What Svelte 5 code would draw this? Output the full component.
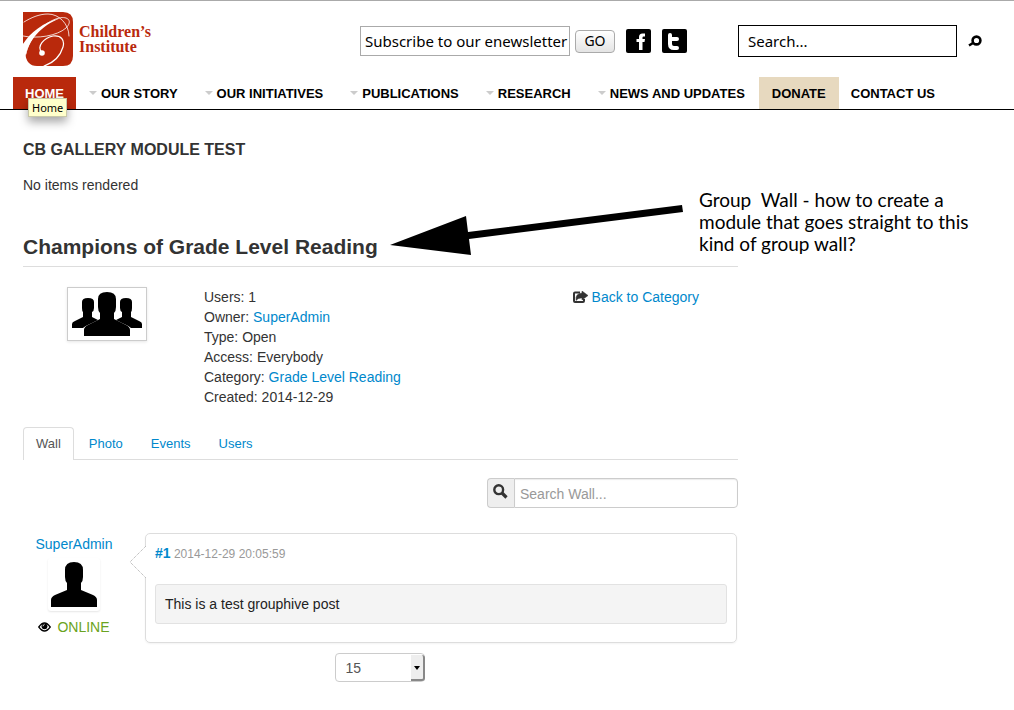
<script lang="ts">
    type NavItem = {
        label: string;
        dropdown?: boolean;
        kind?: 'active' | 'donate';
    };

    const navItems: NavItem[] = [
        { label: 'HOME', kind: 'active' },
        { label: 'OUR STORY', dropdown: true },
        { label: 'OUR INITIATIVES', dropdown: true },
        { label: 'PUBLICATIONS', dropdown: true },
        { label: 'RESEARCH', dropdown: true },
        { label: 'NEWS AND UPDATES', dropdown: true },
        { label: 'DONATE', kind: 'donate' },
        { label: 'CONTACT US' },
    ];

    const details = [
        { name: 'Users', value: '1' },
        { name: 'Owner', value: 'SuperAdmin', link: true },
        { name: 'Type', value: 'Open' },
        { name: 'Access', value: 'Everybody' },
        { name: 'Category', value: 'Grade Level Reading', link: true },
        { name: 'Created', value: '2014-12-29' },
    ];

    const tabs = ['Wall', 'Photo', 'Events', 'Users'];

    let activeTab = $state('Wall');
    let pageSize = $state('15');
</script>

<header class="site-header">
    <a class="brand" href="#home">
        <svg width="50" height="54" viewBox="0 0 50 54" aria-hidden="true">
            <path d="M0 0H40Q50 0 50 10V44Q50 54 40 54H14Q3 54 2 40Q2 34 0 31Z" fill="#b9290c" />
            <g fill="none" stroke="#fff" stroke-linecap="round">
                <path d="M0 24C14 27 34 24 43 16C50 9 45 4 36 6C20 10 5 27 3 42" stroke-width="0.800" />
                <path d="M46 24C46 12 36 2 25 2C17 2 9 5 1 10" stroke-width="0.800" />
                <path d="M19 41C13 34 21 26 30 24C38 23 42 28 40 35C37 45 30 51 21 54" stroke-width="1.200" />
            </g>
            <path d="M38 6C20 10 7 21 0 32V35L2 46C6 28 17 14 38 6Z" fill="#fff" />
            <circle cx="19" cy="41" r="2.800" fill="#fff" />
        </svg>
        <span class="brand-name">Children’s<br />Institute</span>
    </a>

    <form class="newsletter">
        <input type="text" aria-label="Email" value="Subscribe to our enewsletter" />
        <button type="button">GO</button>
    </form>

    <div class="social">
        <a href="#facebook" aria-label="Facebook">
            <svg width="25" height="24" viewBox="0 0 25 24">
                <rect width="25" height="24" rx="2" fill="#000" />
                <path d="M13 21V13H10.500V10H13V8Q13 4.500 16.500 4.500H19V7.500H17.500Q16.500 7.500 16.500 8.500V10H19L18.500 13H16.500V21Z" fill="#fff" />
            </svg>
        </a>
        <a href="#twitter" aria-label="Twitter">
            <svg width="25" height="24" viewBox="0 0 25 24">
                <rect width="25" height="24" rx="2" fill="#000" />
                <path d="M8 6V15Q8 19 12 19H15M8 10H15" fill="none" stroke="#fff" stroke-width="4" stroke-linecap="round" />
            </svg>
        </a>
    </div>

    <form class="site-search">
        <input type="text" aria-label="Search" value="Search..." />
        <button type="button" aria-label="Search">
            <svg width="14" height="12" viewBox="0 0 14 12">
                <circle cx="8.500" cy="5.500" r="3.900" fill="none" stroke="#000" stroke-width="2.600" />
                <path d="M5 8L1 10.500" stroke="#000" stroke-width="2.500" />
            </svg>
        </button>
    </form>
</header>

<nav class="main-nav">
    {#each navItems as item}
        <a
            href="#nav"
            class:active={item.kind === 'active'}
            class:donate={item.kind === 'donate'}
            class:dropdown={item.dropdown}
        >
            {item.label}
            {#if item.kind === 'active'}
                <span class="tooltip" role="tooltip">Home</span>
            {/if}
        </a>
    {/each}
</nav>

<main>
    <section class="gallery">
        <h3>CB GALLERY MODULE TEST</h3>
        <p>No items rendered</p>
    </section>

    <h2>Champions of Grade Level Reading</h2>

    <section class="group">
        <div class="group-thumb">
            <svg width="70" height="44" viewBox="0 0 70 44" role="img" aria-label="Group">
                <path d="M10 10Q10 6 16 6Q22 6 22 10V16Q22 19 20 20V25L26 28L20 31Q13 34 11 36H0V32Q0 30 3 29L11 25V20Q10 19 10 16Z" />
                <path d="M60 10Q60 6 54 6Q48 6 48 10V16Q48 19 50 20V25L44 28L50 31Q57 34 59 36H70V32Q70 30 67 29L59 25V20Q60 19 60 16Z" />
                <path d="M26 7Q26 0 35 0Q44 0 44 7V15Q44 19 42 21V27L54 33Q58 35 58 38V44H12V38Q12 35 16 33L28 27V21Q26 19 26 15Z" />
            </svg>
        </div>
        <ul class="details">
            {#each details as row}
                <li>
                    {row.name}:
                    {#if row.link}<a href="#detail">{row.value}</a>{:else}{row.value}{/if}
                </li>
            {/each}
        </ul>
        <div class="back">
            <svg width="15" height="12" viewBox="0 0 15 12" aria-hidden="true">
                <path d="M7 1.500H2Q1 1.500 1 2.500V10Q1 11 2 11H10Q11 11 11 10V8" fill="none" stroke="#333" stroke-width="2" />
                <path d="M9 0L15 4.500L9 9V7Q5 6.500 3 9.500Q2 2.500 9 2Z" fill="#333" stroke="#333" stroke-width="0.500" />
            </svg>
            <a href="#category">Back to Category</a>
        </div>
    </section>

    <div class="tabs" role="tablist">
        {#each tabs as tab}
            <button
                type="button"
                role="tab"
                aria-selected={activeTab === tab}
                class:selected={activeTab === tab}
                onclick={() => (activeTab = tab)}
            >{tab}</button>
        {/each}
    </div>

    <form class="wall-search">
        <label for="wall-query" aria-label="Search Wall">
            <svg width="15" height="15" viewBox="0 0 15 15">
                <circle cx="5.700" cy="5.700" r="4.400" fill="none" stroke="#333" stroke-width="2.400" />
                <path d="M9 9L13.500 13.500" stroke="#333" stroke-width="3.200" />
            </svg>
        </label>
        <input id="wall-query" type="text" placeholder="Search Wall..." />
    </form>

    <article class="post">
        <div class="author">
            <a href="#author">SuperAdmin</a>
            <div class="avatar">
                <svg width="46" height="45" viewBox="0 0 46 45" role="img" aria-label="Avatar">
                    <path d="M14 8Q14 0 23 0Q32 0 32 8V15Q32 19 30 21V28L42 33Q46 35 46 38V45H0V38Q0 35 4 33L16 28V21Q14 19 14 15Z" />
                </svg>
            </div>
            <div class="status">
                <svg width="13" height="10" viewBox="0 0 13 10" aria-hidden="true">
                    <path d="M0.800 5Q6.500 -3 12.200 5Q6.500 13 0.800 5Z" fill="#fff" stroke="#000" stroke-width="1.300" />
                    <circle cx="6.500" cy="4.300" r="2.900" fill="#000" />
                    <path d="M5 4.300Q5 2.800 6.500 2.600" fill="none" stroke="#fff" stroke-width="0.900" />
                </svg>
                ONLINE
            </div>
        </div>
        <div class="bubble">
            <svg class="pointer" width="17" height="34" viewBox="0 0 17 34" aria-hidden="true">
                <path d="M17 1L1 17L17 33" fill="#fff" stroke="#aaa" stroke-dasharray="1 1" />
            </svg>
            <div class="meta"><a href="#post">#1</a> 2014-12-29 20:05:59</div>
            <div class="message">This is a test grouphive post</div>
        </div>
    </article>

    <div class="pager">
        <div class="select-box">
            <select aria-label="Posts per page" bind:value={pageSize}>
                <option>15</option>
                <option>30</option>
                <option>50</option>
            </select>
            <span class="select-arrow"></span>
        </div>
    </div>

    <aside class="annotation">
        <svg width="294" height="52" viewBox="0 0 294 52" aria-hidden="true">
            <path d="M0 41L76 12L78 28L292 1L293 8L79 35L81 51Z" />
        </svg>
        <p>Group&nbsp; Wall - how to create a<br />module that goes straight to this<br />kind of group wall?</p>
    </aside>
</main>

<style>
    :global(body) {
        background: #fff;
        color: #333;
        font: 14px/20px "Liberation Sans", Arial, sans-serif;
    }

    :global(*) {
        box-sizing: border-box;
    }

    a {
        color: #08c;
        text-decoration: none;
    }

    svg {
        display: block;
    }

    input, button, select {
        margin: 0;
        font: inherit;
        color: #000;
    }

    .site-header {
        display: flex;
        align-items: center;
        height: 77px;
        padding: 0 32px 0 23px;
        border-top: 1px solid #aaa;
    }

    .brand {
        display: flex;
        align-items: center;
        gap: 6px;
        margin-right: auto;
        color: #b9290c;
    }

    .brand-name {
        font: bold 16px/15px "Liberation Serif", "Times New Roman", serif;
    }

    .newsletter,
    .social,
    .site-search {
        display: flex;
        align-items: center;
        padding-top: 4px;
        /* Lucida-like metrics for the header controls */
        font: 15px/20px "Noto Sans", sans-serif;
    }

    .newsletter {
        gap: 5px;
    }

    .newsletter input {
        width: 210px;
        height: 30px;
        padding: 0 0 0 4px;
        border: 1px solid #aaa;
    }

    .newsletter button {
        width: 40px;
        height: 23px;
        padding: 0;
        border: 1px solid #aaa;
        border-radius: 4px;
        background: linear-gradient(#fff, #e4e4e4);
        font-size: 14px;
        line-height: 20px;
    }

    .social {
        gap: 11px;
        margin: 0 51px 0 11px;
    }

    .site-search {
        gap: 11px;
    }

    .site-search input {
        width: 219px;
        height: 32px;
        padding: 0 9px;
        border: 1px solid #000;
    }

    .site-search button {
        padding: 0;
        border: 0;
        background: none;
    }

    .main-nav {
        display: flex;
        height: 33px;
        padding-left: 13px;
        border-bottom: 1px solid #000;
        font-size: 13px;
        font-weight: bold;
        line-height: 33px;
    }

    .main-nav a {
        position: relative;
        height: 32px;
        padding: 0 12px;
        color: #000;
        white-space: nowrap;
    }

    .main-nav .active {
        background: #b9290c;
        color: #fff;
    }

    .main-nav .donate {
        padding: 0 13px;
        background: #e7d9bf;
    }

    .main-nav .dropdown {
        padding: 0 14px 0 25px;
    }

    .main-nav .dropdown::before {
        content: "";
        position: absolute;
        left: 13px;
        top: 14px;
        border: 4px solid transparent;
        border-top-color: #ccc;
        border-bottom: 0;
    }

    .tooltip {
        position: absolute;
        left: 15px;
        top: 21px;
        z-index: 1;
        padding: 0 3px;
        border: 1px solid #c8c8a8;
        background: #ffffcb;
        box-shadow: 0 5px 10px rgba(0, 0, 0, 0.35);
        color: #000;
        font: 11px/17px "Noto Sans", sans-serif;
    }

    main {
        position: relative;
        padding: 30px 276px 28px 23px;
    }

    h2, h3, p, ul {
        margin: 0;
        padding: 0;
    }

    h3 {
        margin-bottom: 15px;
        font-size: 16px;
        line-height: 20px;
    }

    h2 {
        margin: 37px 0 20px;
        padding-bottom: 4px;
        border-bottom: 1px solid #ddd;
        font-size: 21px;
        line-height: 30px;
    }

    .group {
        display: flex;
    }

    .group-thumb {
        align-self: flex-start;
        margin: 0 57px 0 44px;
        padding: 4px;
        border: 1px solid #ccc;
        box-shadow: 0 1px 3px rgba(0, 0, 0, 0.1);
    }

    .details {
        flex: 1;
        list-style: none;
    }

    .back {
        display: flex;
        align-items: center;
        align-self: flex-start;
        gap: 4px;
        margin-right: 39px;
    }

    .tabs {
        display: flex;
        gap: 2px;
        margin: 20px 0 18px;
        border-bottom: 1px solid #ddd;
    }

    .tabs button {
        height: 33px;
        margin-bottom: -1px;
        padding: 0 12px;
        border: 1px solid transparent;
        border-bottom: 0;
        border-radius: 4px 4px 0 0;
        background: none;
        color: #08c;
        font-size: 13px;
    }

    .tabs .selected {
        border-color: #ddd;
        background: #fff;
        color: #555;
    }

    .wall-search {
        display: flex;
        justify-content: flex-end;
        height: 30px;
        margin-bottom: 25px;
    }

    .wall-search label {
        width: 27px;
        padding: 5px;
        border: 1px solid #ccc;
        border-right: 0;
        border-radius: 4px 0 0 4px;
        background: #eee;
    }

    .wall-search input {
        width: 224px;
        padding: 2px 5px 0;
        border: 1px solid #ccc;
        border-radius: 0 4px 4px 0;
        box-shadow: inset 0 1px 1px rgba(0, 0, 0, 0.08);
    }

    .wall-search input::placeholder {
        color: #999;
        opacity: 1;
    }

    .post {
        display: flex;
        gap: 20px;
        padding-right: 1px;
    }

    .author {
        display: flex;
        flex-direction: column;
        align-items: center;
        width: 102px;
        padding-top: 1px;
    }

    .avatar {
        margin: 4px 0 6px;
        padding: 4px 3px;
        border-radius: 3px;
        box-shadow: 0 1px 2px rgba(0, 0, 0, 0.1);
    }

    .status {
        display: flex;
        align-items: center;
        gap: 6px;
        color: #6aa322;
    }

    .bubble {
        position: relative;
        flex: 1;
        min-height: 110px;
        padding: 9px;
        border: 1px solid #ddd;
        border-radius: 5px;
        box-shadow: 0 1px 2px rgba(0, 0, 0, 0.05);
    }

    .pointer {
        position: absolute;
        left: -17px;
        top: 11px;
    }

    .meta {
        margin-bottom: 20px;
        color: #999;
        font-size: 12px;
    }

    .meta a {
        font-size: 14px;
        font-weight: bold;
    }

    .message {
        padding: 9px;
        border: 1px solid #e2e2e2;
        border-radius: 3px;
        background: #f4f4f4;
        color: #222;
    }

    .pager {
        display: flex;
        justify-content: center;
        margin-top: 10px;
        padding-right: 2px;
    }

    .select-box {
        position: relative;
    }

    select {
        display: block;
        width: 90px;
        height: 29px;
        padding: 0 10px;
        border: 1px solid #ccc;
        border-radius: 4px;
        background: #fff;
        color: #555;
        appearance: none;
    }

    .select-arrow {
        position: absolute;
        top: 2px;
        right: 0;
        bottom: 1px;
        width: 14px;
        border-right: 2px solid #888;
        border-bottom: 2px solid #888;
        border-radius: 0 3px 3px 0;
        background: #eee;
        pointer-events: none;
    }

    .select-arrow::before {
        content: "";
        position: absolute;
        left: 3px;
        top: 11px;
        border: 3px solid transparent;
        border-top: 4px solid #000;
        border-bottom: 0;
    }

    /* callout drawn over the page content */
    .annotation {
        position: absolute;
        left: 390px;
        top: 79px;
        display: flex;
        gap: 15px;
        color: #000;
        font: 19px/22px Lato, sans-serif;
        white-space: nowrap;
    }

    .annotation svg {
        margin-top: 15px;
    }
</style>
